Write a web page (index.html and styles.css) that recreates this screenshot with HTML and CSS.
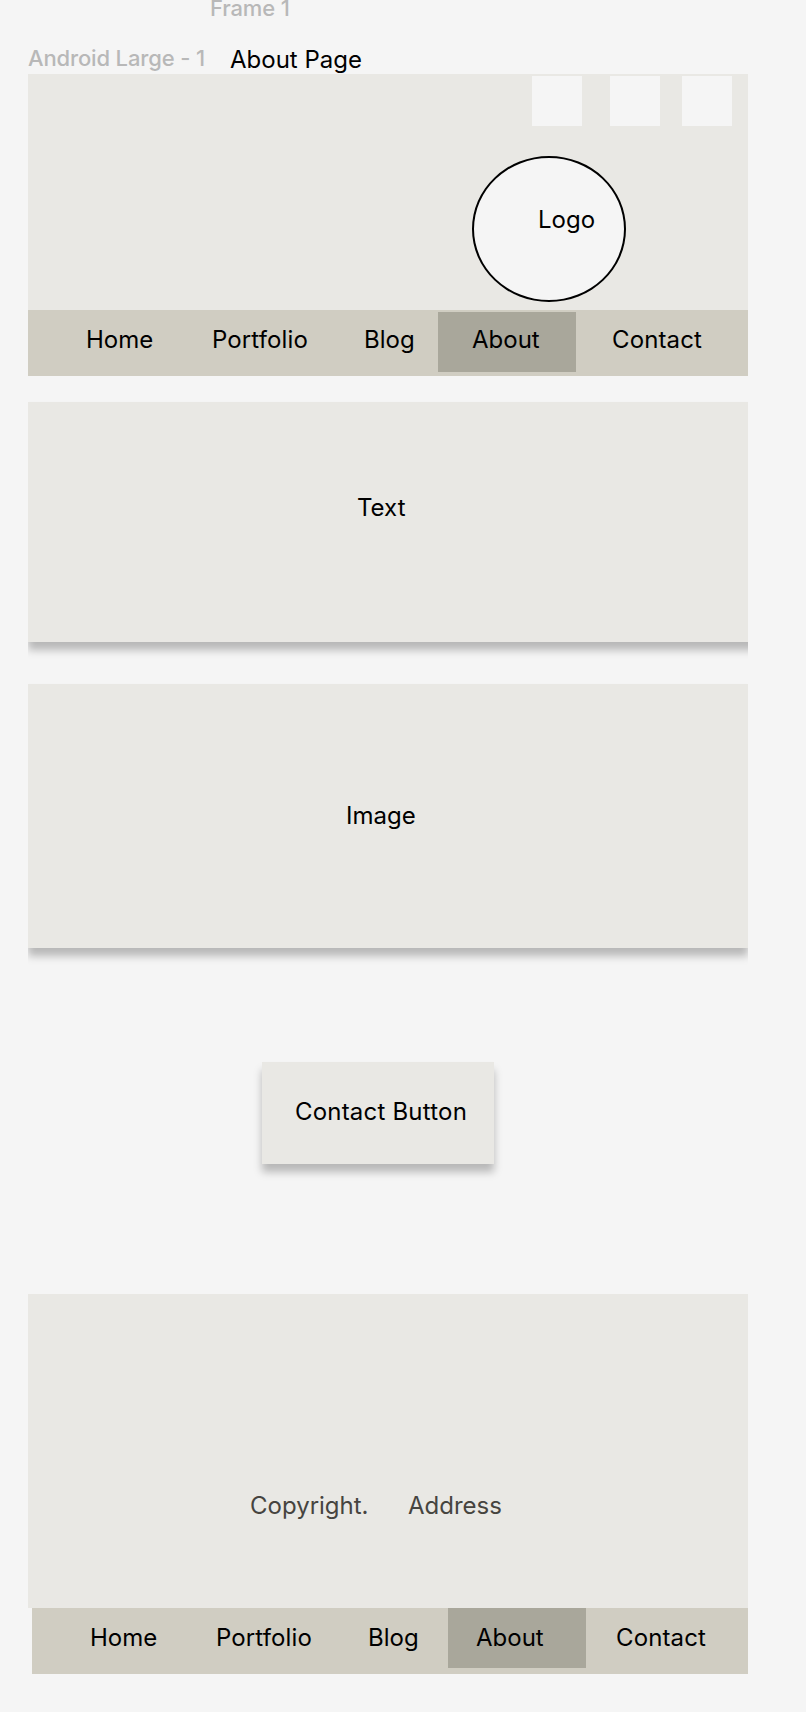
FILE: index.html
```html
<!DOCTYPE html>
<html lang="en">
<head>
<meta charset="utf-8">
<title>About Page</title>
<link rel="stylesheet" href="styles.css">
</head>
<body>
<div class="labels">
  <div class="label frame-label">Frame 1</div>
  <div class="label-row">
    <span class="label">Android Large - 1</span>
    <h1 class="page-title">About Page</h1>
  </div>
</div>
<main class="frame">
  <header class="header">
    <div class="socials"><span class="social"></span><span class="social"></span><span class="social"></span></div>
    <div class="logo">Logo</div>
  </header>
  <nav class="nav">
    <a>Home</a><a class="wide">Portfolio</a><a>Blog</a><a class="active">About</a><a class="wide">Contact</a>
  </nav>
  <section class="card card-text">Text</section>
  <section class="card card-image">Image</section>
  <button class="contact-button">Contact Button</button>
  <footer class="footer"><span>Copyright.</span><span>Address</span></footer>
  <nav class="nav nav-footer">
    <a>Home</a><a class="wide">Portfolio</a><a>Blog</a><a class="active">About</a><a class="wide">Contact</a>
  </nav>
</main>
</body>
</html>
```
FILE: styles.css
```css
* { box-sizing: border-box; }
body {
  margin: 0;
  height: 1712px;
  overflow: hidden;
  background: #f5f5f5;
  color: #000;
  font: 400 24px/30px Inter, sans-serif;
  white-space: nowrap;
}
.labels { display: flow-root; height: 74px; padding-left: 28px; }
.label { width: 180px; color: #b8b8b8; font-size: 22px; line-height: 28px; font-weight: 500; letter-spacing: -0.15px; }
.frame-label { margin: -6px 0 0 182px; }
.label-row { display: flex; margin-top: 22px; height: 30px; }
.page-title { margin: 1px 0 0 22px; font-size: 24px; font-weight: 400; line-height: 30px; }
.frame {
  display: flex;
  flex-direction: column;
  width: 720px;
  height: 1600px;
  margin-left: 28px;
  overflow: hidden;
}
.header { height: 236px; padding-top: 2px; background: #e9e8e4; }
.socials { display: grid; grid-template-columns: 78px 72px 50px; padding-left: 504px; }
.social { width: 50px; height: 50px; background: #f5f5f5; }
.logo {
  width: 154px;
  height: 146px;
  margin: 30px 0 0 444px;
  padding: 47px 0 0 64px;
  border: 2px solid #000;
  border-radius: 50%;
  background: #f5f5f5;
}
.nav {
  display: grid;
  grid-template-columns: 126px 152px 74px 138px 1fr;
  height: 66px;
  padding-left: 58px;
  background: #d0cdc2;
}
.nav a { padding-top: 15px; }
.nav .wide { letter-spacing: 0.12px; }
.nav a:last-child { padding-left: 36px; }
.nav .active { height: 60px; margin-top: 2px; padding: 13px 0 0 34px; background: #a9a79b; }
.card { flex: none; background: #e9e8e4; box-shadow: 0 8px 8px rgba(0, 0, 0, 0.25); }
.card-text { width: 740px; height: 240px; margin-top: 26px; padding: 91px 0 0 329px; }
.card-image { height: 264px; margin-top: 42px; padding: 117px 0 0 318px; }
.contact-button {
  width: 232px;
  height: 102px;
  margin: 114px 0 0 234px;
  padding: 0 0 2px 33px;
  border: 0;
  background: #e9e8e4;
  box-shadow: 0 8px 8px rgba(0, 0, 0, 0.25);
  color: inherit;
  font: inherit;
  letter-spacing: 0.2px;
  text-align: left;
}
.footer {
  display: grid;
  grid-template-columns: 158px 1fr;
  height: 314px;
  margin-top: 130px;
  padding: 197px 0 0 222px;
  background: #e9e8e4;
  color: #46443f;
}
.nav-footer { grid-template-columns: 126px 152px 80px 138px 1fr; margin-left: 4px; }
.nav-footer .active { margin-top: 0; padding: 15px 0 0 28px; }
.nav-footer a:last-child { padding-left: 30px; }
```
